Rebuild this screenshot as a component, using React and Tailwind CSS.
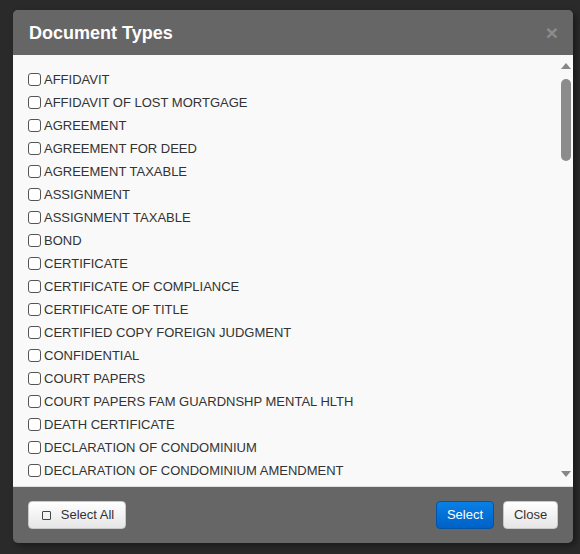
import React from "react";

const items = [
  "AFFIDAVIT",
  "AFFIDAVIT OF LOST MORTGAGE",
  "AGREEMENT",
  "AGREEMENT FOR DEED",
  "AGREEMENT TAXABLE",
  "ASSIGNMENT",
  "ASSIGNMENT TAXABLE",
  "BOND",
  "CERTIFICATE",
  "CERTIFICATE OF COMPLIANCE",
  "CERTIFICATE OF TITLE",
  "CERTIFIED COPY FOREIGN JUDGMENT",
  "CONFIDENTIAL",
  "COURT PAPERS",
  "COURT PAPERS FAM GUARDNSHP MENTAL HLTH",
  "DEATH CERTIFICATE",
  "DECLARATION OF CONDOMINIUM",
  "DECLARATION OF CONDOMINIUM AMENDMENT",
];

export default function App() {
  return (
    <div
      className="w-[580px] h-[554px] bg-[#2a2a2a] pt-[10px] pl-[13px]"
      style={{ fontFamily: '"Liberation Sans", Arial, sans-serif' }}
    >
      <div className="w-[560px] h-[533px] rounded-[5px] overflow-hidden flex flex-col bg-[#666666] shadow-[3px_3px_6px_rgba(0,0,0,0.4)]">
        {/* header */}
        <div className="h-[45px] flex items-center justify-between pl-[16px] pr-[15px] bg-[#666666]">
          <span className="text-white font-bold text-[18px] leading-none">Document Types</span>
          <span className="text-[#8c8c8c] font-bold text-[21px] leading-none">×</span>
        </div>
        {/* body */}
        <div className="h-[432px] bg-[#f9f9f9] flex border-b border-[#dddddd]">
          <div className="flex-1 overflow-hidden pt-[13px] pl-[15px]">
            {items.map((t) => (
              <div key={t} className="h-[23px] flex items-center text-[13px] text-[#333333]">
                <span className="w-[13px] h-[13px] border border-[#555555] rounded-[3px] bg-white mr-[3px] shrink-0" />
                <span className="leading-none whitespace-nowrap">{t}</span>
              </div>
            ))}
          </div>
          <div className="w-[15px] relative bg-[#f9f9f9]">
            <div className="absolute left-[3px] top-[8px] w-0 h-0 border-l-[5px] border-r-[5px] border-b-[6px] border-l-transparent border-r-transparent border-b-[#888888]" />
            <div className="absolute left-[3px] top-[24px] w-[10px] h-[82px] rounded-full bg-[#8c8c8c]" />
            <div className="absolute left-[3px] top-[416px] w-0 h-0 border-l-[5px] border-r-[5px] border-t-[6px] border-l-transparent border-r-transparent border-t-[#888888]" />
          </div>
        </div>
        {/* footer */}
        <div className="flex-1 flex items-center justify-between pl-[15px] pr-[15px]">
          <button className="h-[28px] w-[98px] rounded-[4px] border border-[#c8c8c8] bg-gradient-to-b from-white to-[#e6e6e6] flex items-center justify-center gap-[10px] pl-[2px] text-[13px] text-[#333333]">
            <span className="w-[9px] h-[9px] border border-[#444444] rounded-[1px] shrink-0" />
            <span className="whitespace-nowrap">Select All</span>
          </button>
          <div className="flex gap-[9px]">
            <button className="h-[28px] w-[58px] rounded-[4px] border border-[#0055a8] bg-gradient-to-b from-[#0a80e6] to-[#0061c6] text-white text-[13px]">
              Select
            </button>
            <button className="h-[28px] w-[55px] rounded-[4px] border border-[#c8c8c8] bg-gradient-to-b from-white to-[#e6e6e6] text-[#333333] text-[13px]">
              Close
            </button>
          </div>
        </div>
      </div>
    </div>
  );
}
